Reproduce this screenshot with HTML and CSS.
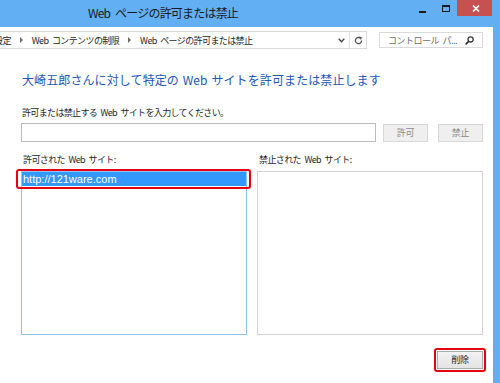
FILE: index.html
```html
<!DOCTYPE html>
<html lang="ja">
<head>
<meta charset="utf-8">
<title>Web ページの許可または禁止</title>
<link rel="stylesheet" href="styles.css">
</head>
<body>
<div class="window">
  <header class="titlebar">
    <div class="title">Web ページの許可または禁止</div>
    <div class="controls">
      <div class="ctl ctl-min"><span class="min-glyph"></span></div>
      <div class="ctl ctl-max"><span class="max-glyph"></span></div>
      <div class="ctl ctl-close">
        <svg width="8" height="7" viewBox="0 0 8 7"><path d="M1 0.5 L7 6.5 M7 0.5 L1 6.5" stroke="#fff" stroke-width="1.6" fill="none"/></svg>
      </div>
    </div>
  </header>
  <div class="frame">
    <div class="main">
      <nav class="navbar">
        <div class="address">
          <div class="crumbs">
            <span class="crumb crumb-cut">設定</span>
            <span class="sep"></span>
            <span class="crumb">Web コンテンツの制限</span>
            <span class="sep"></span>
            <span class="crumb">Web ページの許可または禁止</span>
          </div>
          <div class="addr-drop">
            <svg width="7" height="5" viewBox="0 0 7 5"><path d="M0.7 0.8 L3.5 3.8 L6.3 0.8" fill="none" stroke="#444" stroke-width="1.3"/></svg>
          </div>
          <div class="addr-refresh">
            <svg width="9" height="9" viewBox="0 0 9 9"><path d="M7.6 4.6 A3.1 3.1 0 1 1 6.2 2" fill="none" stroke="#555" stroke-width="1.3"/><path d="M4.6 0.4 L7.9 0.9 L6.9 3.9 Z" fill="#555"/></svg>
          </div>
        </div>
        <div class="search">
          <span class="search-text">コントロール パ...</span>
          <svg class="search-icon" width="9" height="9" viewBox="0 0 9 9"><circle cx="5.6" cy="3.4" r="2.6" fill="none" stroke="#333" stroke-width="1.3"/><path d="M3.7 5.3 L1.2 7.8" stroke="#333" stroke-width="1.7" stroke-linecap="round"/></svg>
        </div>
      </nav>
      <main class="content">
        <h1 class="heading">大崎五郎さんに対して特定の Web サイトを許可または禁止します</h1>
        <label class="label">許可または禁止する Web サイトを入力してください。</label>
        <div class="entry-row">
          <div class="textbox"></div>
          <button class="btn btn-disabled btn-allow">許可</button>
          <button class="btn btn-disabled btn-block">禁止</button>
        </div>
        <div class="lists">
          <section class="list-col">
            <div class="list-label">許可された Web サイト:</div>
            <div class="listbox listbox-focus">
              <div class="list-item selected">http://121ware.com</div>
            </div>
          </section>
          <section class="list-col">
            <div class="list-label">禁止された Web サイト:</div>
            <div class="listbox"></div>
          </section>
        </div>
        <div class="footer">
          <button class="btn btn-delete">削除</button>
        </div>
      </main>
    </div>
    <div class="frame-right"></div>
  </div>
</div>
</body>
</html>
```
FILE: styles.css
```css
* { box-sizing: border-box; }
html, body { margin: 0; padding: 0; }
body {
  width: 500px;
  height: 383px;
  overflow: hidden;
  background: #ffffff;
  font-family: "Noto Sans CJK JP", "Noto Sans", sans-serif;
  color: #1e1e1e;
}
.window { display: flex; flex-direction: column; height: 383px; }

/* title bar */
.titlebar {
  height: 27px;
  flex: none;
  background: #62aff4;
  display: flex;
}
.title {
  margin-left: 88px;
  font-size: 12px;
  line-height: 26px;
  letter-spacing: -0.8px;
  word-spacing: 3px;
  color: #1b1b1b;
  white-space: nowrap;
}
.controls {
  margin-left: auto;
  margin-right: 8px;
  display: flex;
  align-items: flex-start;
}
.ctl { width: 23px; height: 20px; }
.min-glyph {
  display: block;
  width: 7px;
  height: 2px;
  background: #1b1b1b;
  margin: 11px auto 0;
}
.max-glyph {
  display: block;
  width: 8px;
  height: 7px;
  border: 1px solid #1b1b1b;
  border-top-width: 2px;
  margin: 5px auto 0;
}
.ctl-close {
  width: 35px;
  height: 16px;
  background: #c75050;
  display: flex;
  align-items: center;
  justify-content: center;
}
.ctl-close svg { display: block; margin-left: 2px; }

/* frame */
.frame { flex: 1; display: flex; min-height: 0; }
.main { flex: 1; display: flex; flex-direction: column; min-width: 0; }
.frame-right { width: 7px; flex: none; background: #62aff4; }

/* navigation bar */
.navbar {
  height: 26px;
  flex: none;
  display: flex;
  align-items: center;
}
.address {
  margin-left: -1px;
  width: 368px;
  height: 18px;
  border: 1px solid #dadada;
  display: flex;
  align-items: stretch;
}
.crumbs {
  flex: 1;
  display: flex;
  align-items: center;
  overflow: hidden;
  white-space: nowrap;
  font-size: 9px;
  letter-spacing: -0.6px;
  word-spacing: 2px;
  color: #1e1e1e;
}
.crumb-cut { margin-left: -6px; }
.sep {
  width: 0;
  height: 0;
  border-left: 3px solid #6a6a6a;
  border-top: 3px solid transparent;
  border-bottom: 3px solid transparent;
  margin: 0 9px 0 9px;
}
.addr-drop {
  width: 16px;
  border-right: 1px solid #e2e2e2;
  display: flex;
  align-items: center;
  justify-content: center;
}
.addr-refresh {
  width: 16px;
  display: flex;
  align-items: center;
  justify-content: center;
}
.search {
  margin-left: 12px;
  width: 104px;
  height: 16px;
  border: 1px solid #dadada;
  display: flex;
  align-items: center;
  padding-left: 8px;
  font-size: 9px;
  letter-spacing: -0.5px;
  word-spacing: 2px;
  color: #6d6d6d;
  white-space: nowrap;
}
.search-icon { margin-left: auto; margin-right: 8px; display: block; }

/* content */
.content {
  flex: 1;
  padding: 19px 10px 0 21px;
  display: flex;
  flex-direction: column;
}
.heading {
  margin: 0;
  padding-left: 1px;
  font-size: 12px;
  font-weight: normal;
  line-height: 16px;
  letter-spacing: 0.1px;
  word-spacing: 1px;
  color: #2157b5;
  white-space: nowrap;
}
.label {
  display: block;
  margin-top: 19px;
  padding-left: 1px;
  font-size: 9px;
  line-height: 12px;
  letter-spacing: -0.65px;
  word-spacing: 2px;
  white-space: nowrap;
}
.entry-row {
  display: flex;
  align-items: flex-start;
  margin-top: 4px;
}
.textbox {
  flex: 1;
  height: 19px;
  border: 1px solid #bcbcbc;
  background: #fff;
}
.btn {
  font-family: "Noto Sans CJK JP", sans-serif;
  font-size: 9px;
  letter-spacing: -0.3px;
  width: 45px;
  height: 18px;
  padding: 0;
  margin: 1px 0 0;
  line-height: 16px;
}
.btn-disabled {
  background: #efefef;
  border: 1px solid #d8d8d8;
  color: #8a8a8a;
}
.btn-allow { margin-left: 7px; }
.btn-block { margin-left: 10px; }

.lists {
  display: grid;
  grid-template-columns: 1fr 1fr;
  column-gap: 10px;
  margin-top: 12px;
}
.list-label {
  font-size: 9px;
  line-height: 12px;
  letter-spacing: -0.6px;
  word-spacing: 2px;
  padding-left: 2px;
  margin-bottom: 5px;
  white-space: nowrap;
}
.listbox {
  height: 164px;
  border: 1px solid #d2d2d2;
  position: relative;
}
.listbox-focus { border-color: #94c3ef; }
.list-item {
  height: 14px;
  line-height: 14px;
  padding-left: 1px;
  font-family: "Liberation Sans", Arial, sans-serif;
  font-size: 11px;
  position: relative;
}
.list-item.selected { background: #3399ff; color: #ffffff; }
.list-item.selected::after {
  content: "";
  position: absolute;
  top: -3px;
  right: -5px;
  bottom: -3px;
  left: -6px;
  border: 2px solid #e60012;
  border-radius: 3px;
}

.footer {
  display: flex;
  justify-content: flex-end;
  margin-top: 16px;
}
.btn-delete {
  width: 46px;
  margin: 0;
  background: linear-gradient(#f3f3f3, #e4e4e4);
  border: 1px solid #acacac;
  color: #1e1e1e;
  position: relative;
}
.btn-delete::after {
  content: "";
  position: absolute;
  top: -4px;
  right: -4px;
  bottom: -4px;
  left: -4px;
  border: 2px solid #e60012;
  border-radius: 3px;
}
```
